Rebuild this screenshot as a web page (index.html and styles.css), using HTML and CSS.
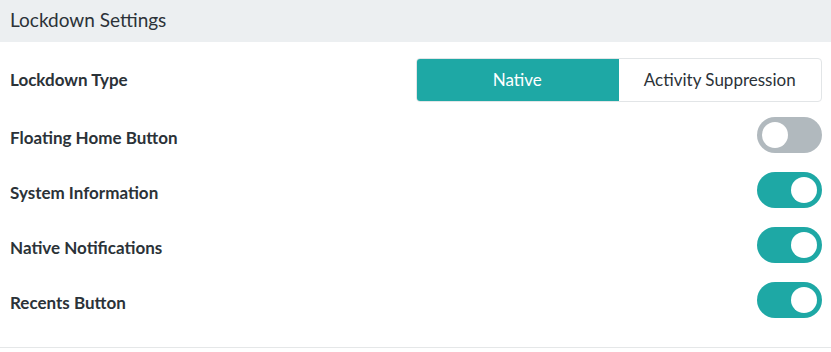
FILE: index.html
```html
<!DOCTYPE html>
<html lang="en">
   <head>
      <title>Lockdown Settings</title>
      <link rel="stylesheet" href="styles.css">
   </head>
   <body>
      <div class="panel">
      	<div class="panel-head">Lockdown Settings</div>
      	
      	<div class="panel-body">
      		<div class="row">
      			<span class="label">Lockdown Type</span>
      			<div class="segment">
      				<div class="seg active">Native</div>
      				<div class="seg">Activity Suppression</div>
      			</div>
      		</div>
      		
      		<div class="row toggle-row">
      			<span class="label">Floating Home Button</span>
      			<div class="switch"><div class="knob"></div></div>
      		</div>
      		
      		<div class="row toggle-row">
      			<span class="label">System Information</span>
      			<div class="switch on"><div class="knob"></div></div>
      		</div>
      		
      		<div class="row toggle-row">
      			<span class="label">Native Notifications</span>
      			<div class="switch on"><div class="knob"></div></div>
      		</div>
      		
      		<div class="row toggle-row">
      			<span class="label">Recents Button</span>
      			<div class="switch on"><div class="knob"></div></div>
      		</div>
      	</div>
      </div>
   </body>
</html>
```

FILE: styles.css
```css
body{
	margin:0;
	padding:0;
	background:#fff;
	font-family:"Lato","Noto Sans",sans-serif;
	color:#2b3238;
}
.panel{
	height:348px;
	border-bottom:1px solid #e5e7e8;
	box-sizing:border-box;
}
.panel-head{
	height:42px;
	background:#eceff1;
	padding:0 10px 3px;
	display:flex;
	align-items:center;
	font-size:19px;
	box-sizing:border-box;
}
.panel-body{
	padding:10px 9px 0 10px;
}
.row{
	height:55px;
	display:flex;
	align-items:center;
	justify-content:space-between;
}
.label{
	font-size:17px;
	font-weight:700;
}
.toggle-row .label{
	padding-top:5px;
}
.segment{
	display:flex;
	width:406px;
	height:44px;
	border:1px solid #e2e5e7;
	border-radius:4px;
	box-sizing:border-box;
	overflow:hidden;
}
.seg{
	flex:1;
	display:flex;
	align-items:center;
	justify-content:center;
	font-size:17px;
	color:#2b3238;
}
.seg.active{
	background:#1ea8a5;
	color:#fff;
	margin:-1px 0 -1px -1px;
}
.switch{
	width:65px;
	height:36px;
	border-radius:18px;
	background:#b1b9be;
	padding:5px;
	box-sizing:border-box;
	display:flex;
}
.switch.on{
	background:#1ea8a5;
	justify-content:flex-end;
}
.knob{
	width:26px;
	height:26px;
	border-radius:50%;
	background:#fff;
}
```
